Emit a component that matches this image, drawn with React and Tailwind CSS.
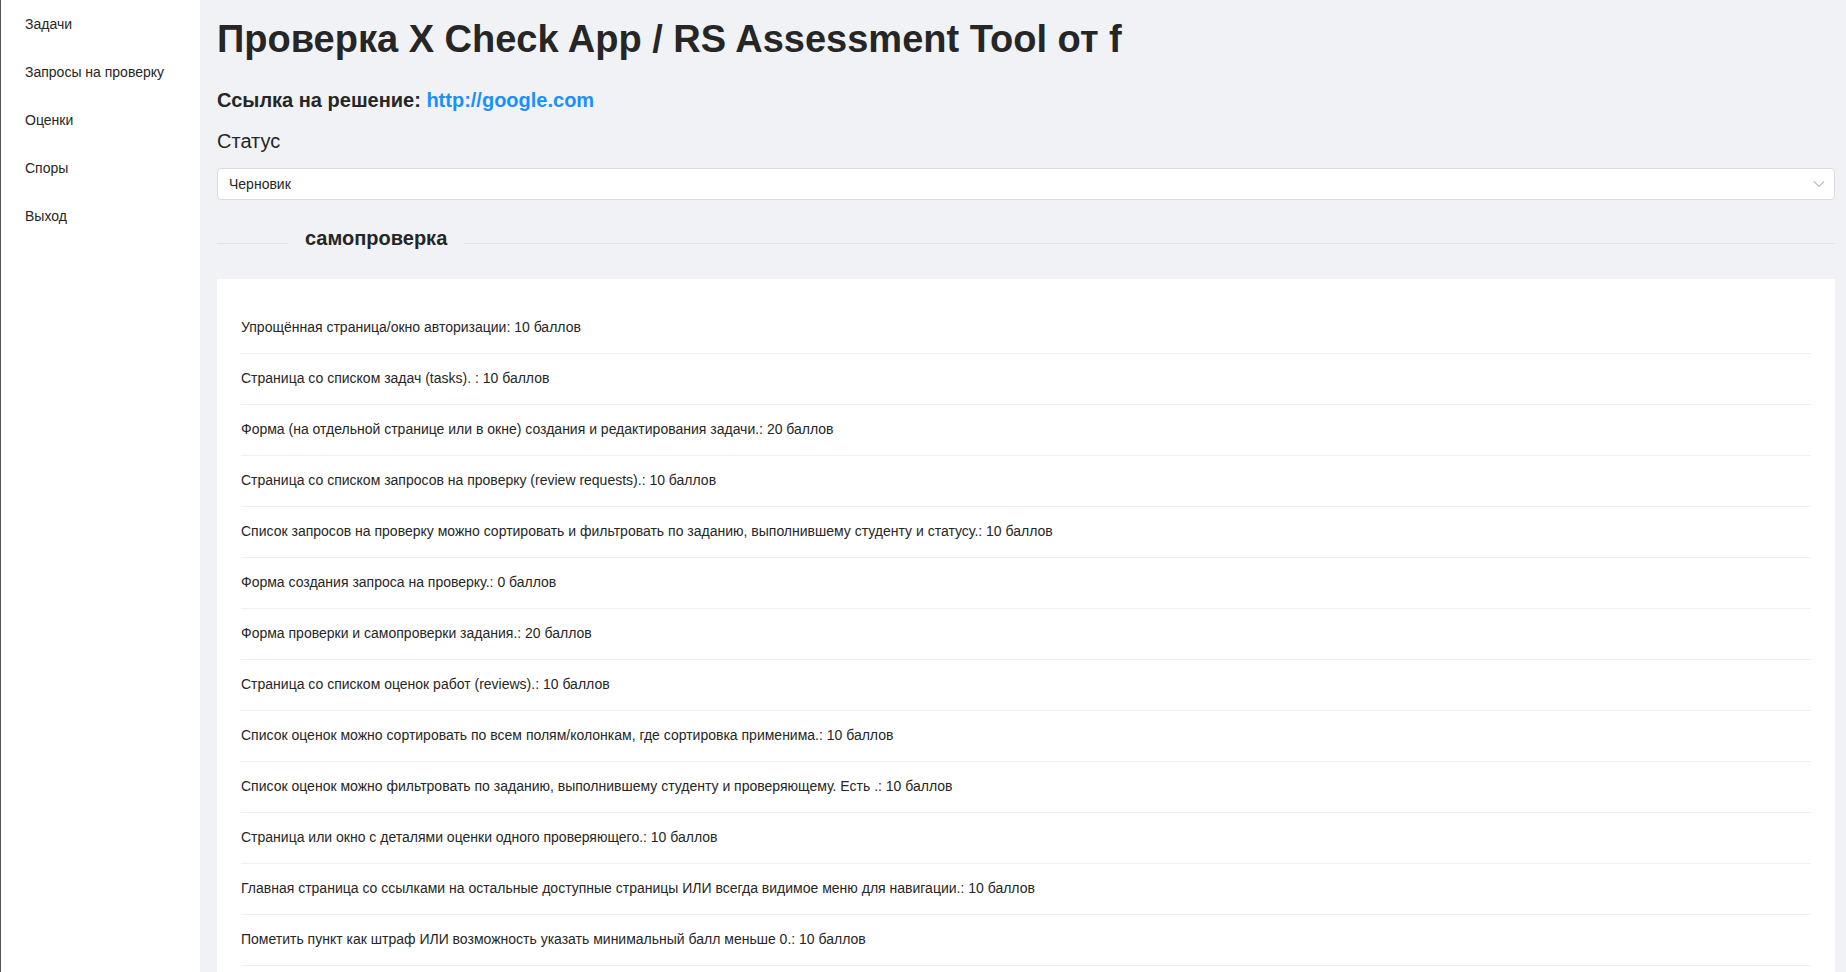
import React from 'react';

const menu = ['Задачи', 'Запросы на проверку', 'Оценки', 'Споры', 'Выход'];

const criteria = [
  'Упрощённая страница/окно авторизации: 10 баллов',
  'Страница со списком задач (tasks). : 10 баллов',
  'Форма (на отдельной странице или в окне) создания и редактирования задачи.: 20 баллов',
  'Страница со списком запросов на проверку (review requests).: 10 баллов',
  'Список запросов на проверку можно сортировать и фильтровать по заданию, выполнившему студенту и статусу.: 10 баллов',
  'Форма создания запроса на проверку.: 0 баллов',
  'Форма проверки и самопроверки задания.: 20 баллов',
  'Страница со списком оценок работ (reviews).: 10 баллов',
  'Список оценок можно сортировать по всем полям/колонкам, где сортировка применима.: 10 баллов',
  'Список оценок можно фильтровать по заданию, выполнившему студенту и проверяющему. Есть .: 10 баллов',
  'Страница или окно с деталями оценки одного проверяющего.: 10 баллов',
  'Главная страница со ссылками на остальные доступные страницы ИЛИ всегда видимое меню для навигации.: 10 баллов',
  'Пометить пункт как штраф ИЛИ возможность указать минимальный балл меньше 0.: 10 баллов',
];

const App = () => {
  return (
    <div className="flex h-screen overflow-hidden font-['Liberation_Sans',Arial,sans-serif] text-[#262626]">
      <aside className="w-[200px] shrink-0 border-l border-[#555] bg-white">
        <nav className="flex flex-col">
          {menu.map((item) => (
            <div key={item} className="flex h-12 items-center pl-6 text-sm text-[#262626]">
              {item}
            </div>
          ))}
        </nav>
      </aside>

      <main className="flex-1 overflow-hidden bg-[#f0f2f5] pl-[17px] pr-[11px] pt-4">
        <h1 className="text-[38px] font-bold leading-[1.23]">
          Проверка X Check App / RS Assessment Tool от f
        </h1>

        <h4 className="mt-[23px] text-[20px] font-bold leading-[1.4]">
          Ссылка на решение:{' '}
          <a href="#" className="text-[#1890ff]">
            http://google.com
          </a>
        </h4>

        <h4 className="mt-[13px] text-[20px] leading-[1.4]">Статус</h4>

        <div className="mt-[13px] flex h-8 items-center justify-between rounded-sm border border-[#d9d9d9] bg-white pl-[11px] pr-[9px] text-sm">
          <span>Черновик</span>
          <svg width="12" height="8" viewBox="0 0 12 8" fill="none" className="text-[#bfbfbf]">
            <path d="M1 1.5l5 5 5-5" stroke="currentColor" strokeWidth="1.2" />
          </svg>
        </div>

        <div className="mt-[23px] flex h-[30px]">
          <div className="mb-[9px] h-px w-[71px] self-end bg-[#e1e3e6]" />
          <span className="px-[17px] text-[20px] font-bold leading-[30px]">самопроверка</span>
          <div className="mb-[9px] h-px flex-1 self-end bg-[#e1e3e6]" />
        </div>

        <div className="mt-[26px] bg-white px-6 pt-6 pb-6">
          {criteria.map((c) => (
            <div key={c} className="flex h-[51px] items-center border-b border-[#f0f0f0] pb-[2px] text-sm">
              {c}
            </div>
          ))}
        </div>
      </main>
    </div>
  );
};

export default App;
